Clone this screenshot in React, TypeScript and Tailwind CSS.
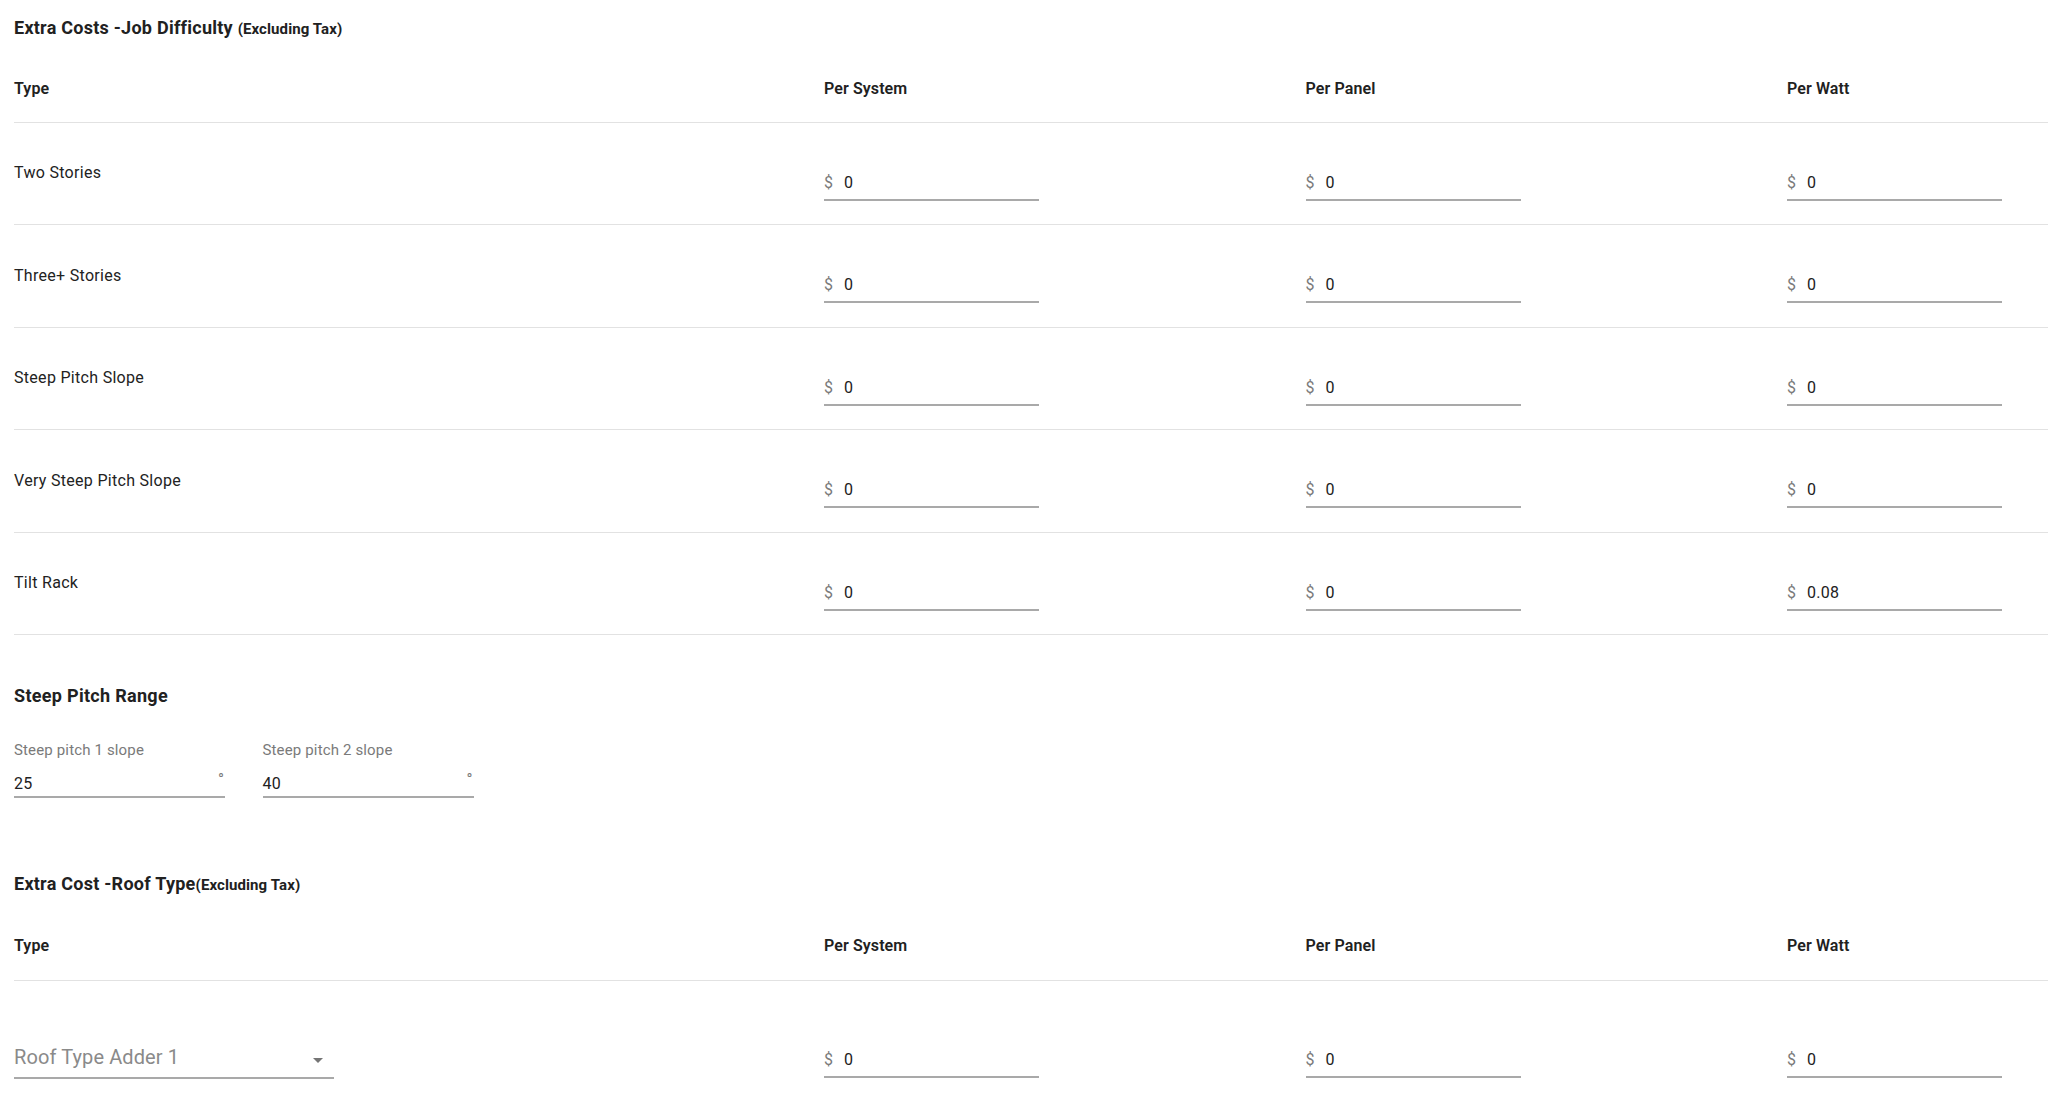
import React from "react";

const COLS = "grid grid-cols-[810px_481.5px_481.5px_1fr]";

function MoneyInput({ value, className = "" }: { value: string; className?: string }) {
  return (
    <div className={`w-[215px] border-b-2 border-[#a9a9a9] pb-[4px] flex items-center ${className}`}>
      <span className="text-[16px] leading-6 text-[#7a7a7a] mr-[11px]">$</span>
      <span className="text-[16px] leading-6 tracking-[0.3px] text-[#212121]">{value}</span>
    </div>
  );
}

function HeaderRow({ pb }: { pb: string }) {
  return (
    <div className={`${COLS} pt-[34.5px] ${pb} border-b border-[#e2e2e2] text-[16px] leading-6 font-semibold tracking-[0.1px] text-[#212121]`}>
      <div>Type</div>
      <div>Per System</div>
      <div>Per Panel</div>
      <div>Per Watt</div>
    </div>
  );
}

function CostRow({ label, values }: { label: string; values: string[] }) {
  return (
    <div className={`${COLS} h-[102.5px] border-b border-[#e2e2e2] items-start`}>
      <div className="mt-[38.5px] text-[16px] leading-6 tracking-[0.3px] text-[#222222]">{label}</div>
      {values.map((v, i) => (
        <MoneyInput key={i} value={v} className="mt-[48px]" />
      ))}
    </div>
  );
}

function SlopeField({ label, value }: { label: string; value: string }) {
  return (
    <div className="w-[211px] flex flex-col">
      <div className="text-[15px] leading-5 tracking-[0.15px] text-[#7a7a7a]">{label}</div>
      <div className="mt-[11.5px] flex items-start justify-between border-b-2 border-[#a9a9a9]">
        <span className="text-[16px] leading-6 tracking-[0.3px] text-[#212121]">{value}</span>
        <span className="text-[16px] leading-[16px] text-[#7a7a7a] mr-[1px]">°</span>
      </div>
    </div>
  );
}

export default function App() {
  const rows: { label: string; values: string[] }[] = [
    { label: "Two Stories", values: ["0", "0", "0"] },
    { label: "Three+ Stories", values: ["0", "0", "0"] },
    { label: "Steep Pitch Slope", values: ["0", "0", "0"] },
    { label: "Very Steep Pitch Slope", values: ["0", "0", "0"] },
    { label: "Tilt Rack", values: ["0", "0", "0.08"] },
  ];

  return (
    <div className="w-[2048px] min-h-[1111px] bg-white pl-[14px] font-['Roboto','Liberation_Sans',sans-serif] text-[#212121] overflow-hidden">
      {/* Section 1 */}
      <div className="pt-[13.5px]">
        <div className="text-[18px] leading-[28px] font-bold tracking-[0.25px] text-[#212121]">
          Extra Costs -Job Difficulty <span className="text-[15px] tracking-[0.1px]">(Excluding Tax)</span>
        </div>
        <HeaderRow pb="pb-[20.5px]" />
        {rows.map((r) => (
          <CostRow key={r.label} label={r.label} values={r.values} />
        ))}
      </div>

      {/* Section 2 */}
      <div className="mt-[47px]">
        <div className="text-[18px] leading-[28px] font-bold tracking-[0.3px]">Steep Pitch Range</div>
        <div className="mt-[30px] flex gap-[37.5px]">
          <SlopeField label="Steep pitch 1 slope" value="25" />
          <SlopeField label="Steep pitch 2 slope" value="40" />
        </div>
      </div>

      {/* Section 3 */}
      <div className="mt-[72.5px]">
        <div className="text-[18px] leading-[28px] font-bold tracking-[0.25px]">
          Extra Cost -Roof Type<span className="text-[15px] tracking-[0.1px]">(Excluding Tax)</span>
        </div>
        <HeaderRow pb="pb-[22.5px]" />
        <div className={`${COLS} h-[140px] items-start`}>
          <div className="mt-[60.5px] w-[320px] border-b-2 border-[#a9a9a9] pb-[5.5px] flex items-center justify-between">
            <span className="text-[20px] leading-[28px] tracking-[0.1px] text-[#8a8a8a]">Roof Type Adder 1</span>
            <svg width="24" height="24" viewBox="0 0 24 24" className="mr-[4px] mt-[6px]">
              <path d="M7 10l5 5 5-5z" fill="#757575" />
            </svg>
          </div>
          <MoneyInput value="0" className="mt-[67px]" />
          <MoneyInput value="0" className="mt-[67px]" />
          <MoneyInput value="0" className="mt-[67px]" />
        </div>
      </div>
    </div>
  );
}
